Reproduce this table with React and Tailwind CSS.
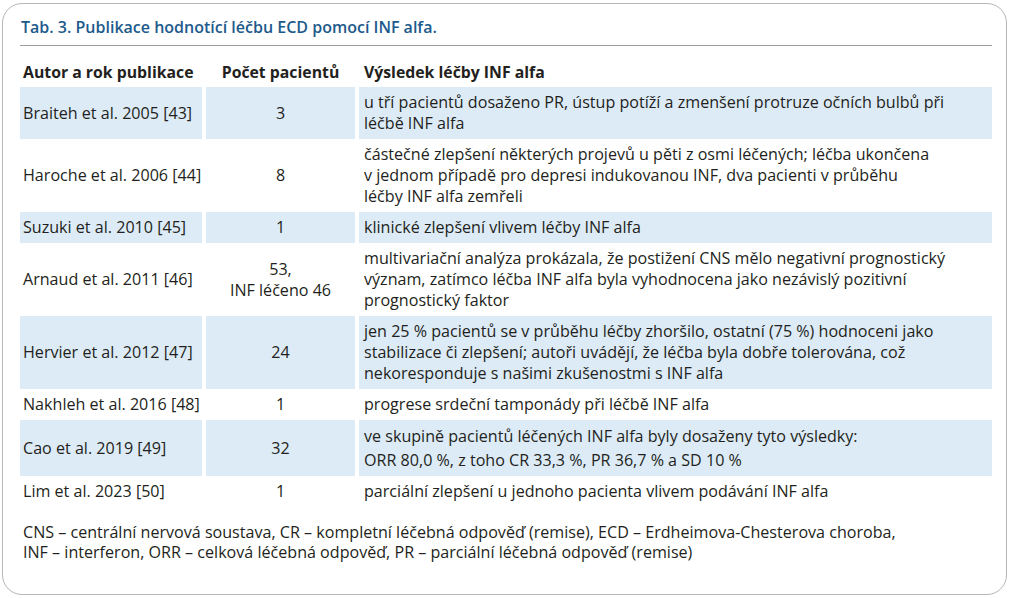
const ROWS = [
  { author: 'Braiteh et al. 2005 [43]', count: ['3'], result: ['u tří pacientů dosaženo PR, ústup potíží a zmenšení protruze očních bulbů při', 'léčbě INF alfa'] },
  { author: 'Haroche et al. 2006 [44]', count: ['8'], result: ['částečné zlepšení některých projevů u pěti z osmi léčených; léčba ukončena', 'v jednom případě pro depresi indukovanou INF, dva pacienti v průběhu', 'léčby INF alfa zemřeli'] },
  { author: 'Suzuki et al. 2010 [45]', count: ['1'], result: ['klinické zlepšení vlivem léčby INF alfa'] },
  { author: 'Arnaud et al. 2011 [46]', count: ['53,', 'INF léčeno 46'], result: ['multivariační analýza prokázala, že postižení CNS mělo negativní prognostický', 'význam, zatímco léčba INF alfa byla vyhodnocena jako nezávislý pozitivní', 'prognostický faktor'] },
  { author: 'Hervier et al. 2012 [47]', count: ['24'], result: ['jen 25 % pacientů se v průběhu léčby zhoršilo, ostatní (75 %) hodnoceni jako', 'stabilizace či zlepšení; autoři uvádějí, že léčba byla dobře tolerována, což', 'nekoresponduje s našimi zkušenostmi s INF alfa'] },
  { author: 'Nakhleh et al. 2016 [48]', count: ['1'], result: ['progrese srdeční tamponády při léčbě INF alfa'] },
  { author: 'Cao et al. 2019 [49]', count: ['32'], result: ['ve skupině pacientů léčených INF alfa byly dosaženy tyto výsledky:', 'ORR 80,0 %, z toho CR 33,3 %, PR 36,7 % a SD 10 %'], tall: true },
  { author: 'Lim et al. 2023 [50]', count: ['1'], result: ['parciální zlepšení u jednoho pacienta vlivem podávání INF alfa'] },
];

function Lines({ items }) {
  return items.map((t, i) => <div key={i}>{t}</div>);
}

export default function App() {
  return (
    <div className="w-[1011px] h-[598px] bg-white pt-[3px] pl-[2px] font-['Open_Sans','Liberation_Sans',sans-serif] text-[#231f20]">
      <div className="w-[1005px] h-[592px] border border-[#b6b6b6] rounded-[20px] pl-[17px] pr-[14px] pt-[12px]">
        {/* Title */}
        <h3 className="text-[16px] leading-[22px] font-semibold text-[#1d5a8c] pl-[1px]">
          Tab. 3. Publikace hodnotící léčbu ECD pomocí INF alfa.
        </h3>
        <div className="mt-[7px] h-px bg-[#9c9c9c]" />

        {/* Table */}
        <div className="text-[16.1px] leading-[21px]">
          <div className="grid grid-cols-[182px_149px_1fr] gap-x-[4px] text-[15.8px] font-bold pt-[16px] pb-[4px]">
            <div className="pl-[3px]">Autor a rok publikace</div>
            <div className="text-center">Počet pacientů</div>
            <div className="pl-[5px]">Výsledek léčby INF alfa</div>
          </div>
          {ROWS.map((r, i) => {
            const bg = i % 2 === 0 ? 'bg-[#ddebf7]' : 'bg-white';
            return (
              <div key={r.author} className="grid grid-cols-[182px_149px_1fr] gap-x-[4px]">
                <div className={`${bg} pl-[3px] py-[5px] flex items-center whitespace-nowrap`}>{r.author}</div>
                <div className={`${bg} py-[5px] flex flex-col justify-center text-center whitespace-nowrap`}>
                  <Lines items={r.count} />
                </div>
                <div className={`${bg} pl-[5px] whitespace-nowrap ${r.tall ? 'py-[4px] leading-[24px]' : 'py-[5px]'}`}>
                  <Lines items={r.result} />
                </div>
              </div>
            );
          })}
          <div className="mt-[15px] pl-[3px] leading-[20px] whitespace-nowrap">
            <div>CNS – centrální nervová soustava, CR – kompletní léčebná odpověď (remise), ECD – Erdheimova-Chesterova choroba,</div>
            <div>INF – interferon, ORR – celková léčebná odpověď, PR – parciální léčebná odpověď (remise)</div>
          </div>
        </div>
      </div>
    </div>
  );
}
